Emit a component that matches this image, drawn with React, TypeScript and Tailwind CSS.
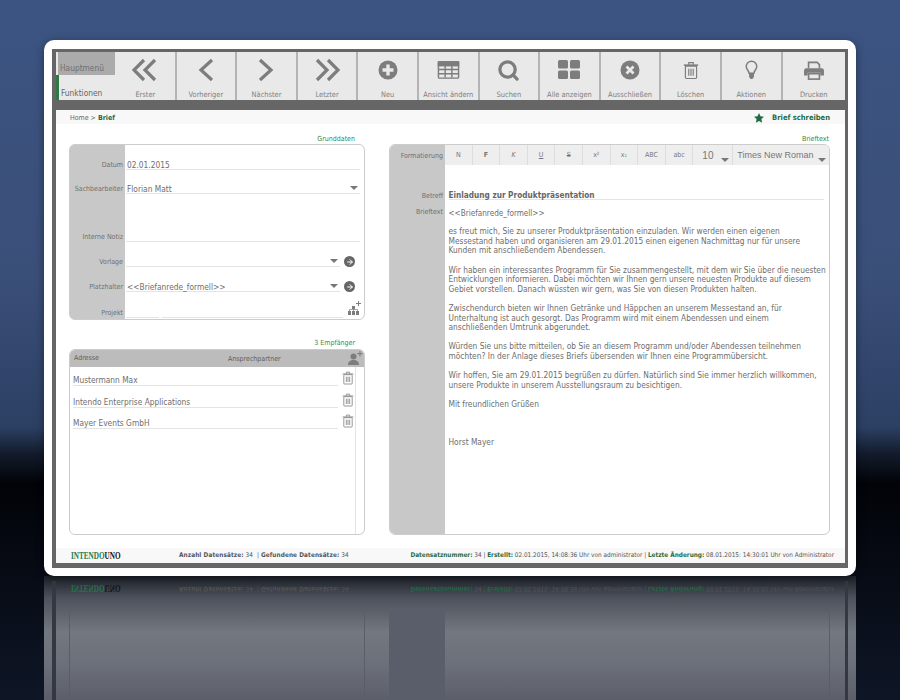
import React from 'react';
import { Search, ArrowRight } from 'lucide-react';

const Gray = '#7d7d7d';

function Chevrons({ points }: { points: string[] }) {
    return (
        <svg width="26" height="24" viewBox="0 0 26 24" fill="none" stroke={Gray} strokeWidth="3.2">
            {points.map(p => <polyline key={p} points={p} />)}
        </svg>
    );
}

function PlusCircle() {
    return (
        <svg width="22" height="22" viewBox="0 0 22 22">
            <circle cx="11" cy="11" r="9.5" fill={Gray} />
            <path d="M11 5.500v11M5.500 11h11" stroke="#e9e9e9" strokeWidth="3.400" />
        </svg>
    );
}

function GridIcon() {
    return (
        <svg width="23" height="20" viewBox="0 0 24 20" fill="none" stroke={Gray} strokeWidth="1.500">
            <rect x="1.500" y="1.500" width="21" height="17" rx="1" />
            <rect x="1.500" y="1.500" width="21" height="4" fill={Gray} />
            <path d="M8.500 5v13M15.500 5v13M1.500 9.500h21M1.500 14h21" />
        </svg>
    );
}

function TilesIcon() {
    return (
        <svg width="22" height="20" viewBox="0 0 22 20" fill={Gray}>
            <rect x="0" y="0" width="10" height="8.500" rx="1.500" />
            <rect x="12" y="0" width="10" height="8.500" rx="1.500" />
            <rect x="0" y="10.500" width="10" height="8.500" rx="1.500" />
            <rect x="12" y="10.500" width="10" height="8.500" rx="1.500" />
        </svg>
    );
}

function XCircle() {
    return (
        <svg width="22" height="22" viewBox="0 0 22 22">
            <circle cx="11" cy="11" r="9.500" fill={Gray} />
            <path d="M7.500 7.500l7 7M14.500 7.500l-7 7" stroke="#e9e9e9" strokeWidth="2.800" />
        </svg>
    );
}

function TrashIcon({ w = 16, h = 19, color = Gray }: { w?: number; h?: number; color?: string }) {
    return (
        <svg width={w} height={h} viewBox="0 0 18 20" fill="none" stroke={color} strokeWidth="1.300">
            <path d="M1 4h16" strokeWidth="1.800" />
            <path d="M6.500 3.500V1.200h5v2.300" />
            <rect x="2.700" y="5" width="12.600" height="14" rx="1" />
            <path d="M6.500 8v8M9 8v8M11.500 8v8" />
        </svg>
    );
}

function BulbIcon() {
    return (
        <svg width="13" height="20" viewBox="0 0 16 24" fill="none" stroke={Gray} strokeWidth="1.800">
            <path d="M5 16c0-3-3.500-4.500-3.500-8.300a6.500 6.500 0 0 1 13 0C14.500 11.500 11 13 11 16z" />
            <path d="M5 17h6v3.500l-2 2.500H7l-2-2.500z" fill={Gray} stroke="none" />
        </svg>
    );
}

function PrintIcon() {
    return (
        <svg width="20" height="19" viewBox="0 0 22 21" fill="none">
            <path d="M5 8V1.500h9.500L17 4v4" stroke={Gray} strokeWidth="1.800" />
            <path d="M2.500 8h17A2.500 2.500 0 0 1 22 10.500V16h-4v-3H4v3H0v-5.500A2.500 2.500 0 0 1 2.500 8z" fill={Gray} />
            <rect x="5" y="14" width="12" height="6" stroke={Gray} strokeWidth="1.800" />
        </svg>
    );
}

function StackPlus() {
    return (
        <svg width="14" height="15" viewBox="0 0 14 15" fill={Gray}>
            <path d="M10.500 0v5M8 2.500h5" stroke={Gray} strokeWidth="1" fill="none" />
            <rect x="4" y="5" width="3" height="3" />
            <path d="M1.500 10V8.500h8V10M5.500 8v2" stroke={Gray} strokeWidth="0.700" fill="none" />
            <rect x="0" y="10" width="3" height="4" />
            <rect x="4" y="10" width="3" height="4" />
            <rect x="8" y="10" width="3" height="4" />
        </svg>
    );
}

function UserPlus() {
    return (
        <svg width="15" height="15" viewBox="0 0 15 15" fill={Gray}>
            <path d="M12 0v5.500M9.200 2.700h5.600" stroke="#777" strokeWidth="1" fill="none" />
            <circle cx="5.500" cy="5.500" r="3" />
            <path d="M0 14c0-3.200 2.300-5 5.500-5s5.500 1.800 5.500 5z" />
        </svg>
    );
}

function GoIcon() {
    return (
        <span className="ml-[1px] flex h-[11px] w-[11px] items-center justify-center rounded-full bg-[#666]">
            <ArrowRight size={8} color="#fff" strokeWidth={3} />
        </span>
    );
}

function Caret() {
    return <span className="mb-[3px] h-0 w-0 border-x-[4px] border-t-[4px] border-x-transparent border-t-[#777]" />;
}

const toolbar = [
    { label: 'Erster', icon: <Chevrons points={['12,2 2,12 12,22', '23,2 13,12 23,22']} /> },
    { label: 'Vorheriger', icon: <Chevrons points={['19,2 8,12 19,22']} /> },
    { label: 'Nächster', icon: <Chevrons points={['7,2 18,12 7,22']} /> },
    { label: 'Letzter', icon: <Chevrons points={['3,2 13,12 3,22', '14,2 24,12 14,22']} /> },
    { label: 'Neu', icon: <PlusCircle /> },
    { label: 'Ansicht ändern', icon: <GridIcon /> },
    { label: 'Suchen', icon: <Search size={23} color={Gray} strokeWidth={3.4} /> },
    { label: 'Alle anzeigen', icon: <TilesIcon /> },
    { label: 'Ausschließen', icon: <XCircle /> },
    { label: 'Löschen', icon: <TrashIcon /> },
    { label: 'Aktionen', icon: <BulbIcon /> },
    { label: 'Drucken', icon: <PrintIcon /> },
];

const formatButtons = [
    { label: 'N', cls: '' },
    { label: 'F', cls: 'font-bold' },
    { label: 'K', cls: 'italic' },
    { label: 'U', cls: 'underline' },
    { label: 'S', cls: 'line-through' },
    { label: 'x²', cls: '' },
    { label: 'x₁', cls: '' },
    { label: 'ABC', cls: '' },
    { label: 'abc', cls: '' },
];

const recipients = ['Mustermann Max', 'Intendo Enterprise Applications', 'Mayer Events GmbH'];

const letterBody = `es freut mich, Sie zu unserer Produktpräsentation einzuladen. Wir werden einen eigenen
Messestand haben und organisieren am 29.01.2015 einen eigenen Nachmittag nur für unsere
Kunden mit anschließendem Abendessen.

Wir haben ein interessantes Programm für Sie zusammengestellt, mit dem wir Sie über die neuesten
Entwicklungen informieren. Dabei möchten wir Ihnen gern unsere neuesten Produkte auf diesem
Gebiet vorstellen. Danach wüssten wir gern, was Sie von diesen Produkten halten.

Zwischendurch bieten wir Ihnen Getränke und Häppchen an unserem Messestand an, für
Unterhaltung ist auch gesorgt. Das Programm wird mit einem Abendessen und einem
anschließenden Umtrunk abgerundet.

Würden Sie uns bitte mitteilen, ob Sie an diesem Programm und/oder Abendessen teilnehmen
möchten? In der Anlage dieses Briefs übersenden wir Ihnen eine Programmübersicht.

Wir hoffen, Sie am 29.01.2015 begrüßen zu dürfen. Natürlich sind Sie immer herzlich willkommen,
unsere Produkte in unserem Ausstellungsraum zu besichtigen.

Mit freundlichen Grüßen



Horst Mayer`;

function FormRow({ label, height, children }: { label: string; height: string; children?: React.ReactNode }) {
    return (
        <div className={`flex items-end ${height}`}>
            <div className="w-[53px] text-right text-[7px] leading-[9px] text-[#707070]">{label}</div>
            <div className="ml-[3px] mr-[4px] flex flex-1 items-end gap-[3px]">{children}</div>
        </div>
    );
}

function Field({ children, caret }: { children?: React.ReactNode; caret?: boolean }) {
    return (
        <div className="flex h-[14px] flex-1 items-end justify-between border-b border-[#e4e4e4] pl-[1px] pr-[2px] text-[8.300px] leading-[8px] text-[#6e6e6e]">
            <span>{children}</span>
            {caret && <Caret />}
        </div>
    );
}

function FooterRow() {
    return (
        <div className="flex h-[15px] items-center pl-[15px] pr-[11px] text-[6.400px] text-[#555]">
            <span className="w-[108px]">
                <span className="inline-block origin-left scale-x-[0.72] whitespace-nowrap [font-family:'Liberation_Serif',serif] text-[10px] font-bold text-[#1f7a4a]">
                    INTENDO<span className="text-[#111]">UNO</span>
                </span>
            </span>
            <span className="whitespace-nowrap tracking-[0.1px]"><b>Anzahl Datensätze:</b> 34 &nbsp;| <b>Gefundene Datensätze:</b> 34</span>
            <span className="ml-auto whitespace-nowrap">
                <b className="text-[#1f6b45]">Datensatznummer:</b> 34 | <b className="text-[#1f6b45]">Erstellt:</b> 02.01.2015, 14:08:36 Uhr von administrator | <b className="text-[#1f6b45]">Letzte Änderung:</b> 08.01.2015: 14:30:01 Uhr von Administrator
            </span>
        </div>
    );
}

export default function App() {
    return (
        <div className="flex h-[700px] w-[900px] flex-col items-center overflow-hidden bg-[linear-gradient(to_bottom,#3c5482_0%,#3a4f78_40%,#2c4064_61%,#121a2a_65%,#020308_69%,#0e1626_100%)] pt-[40px] [font-family:'DejaVu_Sans_Condensed','DejaVu_Sans',sans-serif]">
            {/* main card */}
            <div className="z-10 h-[536px] w-[812px] shrink-0 rounded-[10px] bg-white px-[8px] pb-[8px] pt-[9px] shadow-[0_2px_8px_rgba(0,0,0,0.4)]">
                <div className="flex h-full flex-col border-b-[5px] border-l-[4px] border-r-[3px] border-t-[3px] border-[#666]">
                    {/* toolbar */}
                    <div className="flex h-[48px] bg-[#e9e9e9]">
                        <div className="relative flex w-[60px] shrink-0 flex-col">
                            <div className="ml-[2px] mr-[1px] flex h-[23px] items-end bg-[#ababab] pb-[1px] pl-[2px] text-[8.300px] text-[#707070]">Hauptmenü</div>
                            <div className="flex flex-1 items-end border-l-[3px] border-[#2f7a42] pb-[1px] pl-[2px] text-[8.300px] text-[#666]">Funktionen</div>
                        </div>
                        {toolbar.map((item, i) => (
                            <div
                                key={item.label}
                                className={`flex min-w-0 flex-col items-center ${i === toolbar.length - 1 ? 'flex-1' : 'w-[60.600px] border-r-2 border-[#b4b4b4]'}`}
                            >
                                <div className="flex h-[40px] items-center justify-center">{item.icon}</div>
                                <div className="whitespace-nowrap text-[7.400px] text-[#808080]">{item.label}</div>
                            </div>
                        ))}
                    </div>
                    <div className="h-[10px] bg-[#666]" />

                    {/* breadcrumb */}
                    <div className="flex h-[14px] items-center justify-between bg-[#f8f8f8] pl-[14px] pr-[15px] pt-[2px] text-[7px] text-[#666]">
                        <span>Home &gt; <b className="text-[#1f6b45]">Brief</b></span>
                        <span className="flex items-center gap-[8px] text-[7.500px] font-bold text-[#1f6b45]">
                            <svg width="10" height="10" viewBox="0 0 10 10" fill="#1f6b45"><path d="M5 0l1.500 3.300 3.500.4-2.600 2.400.7 3.600L5 7.900 1.900 9.700l.7-3.600L0 3.700l3.500-.4z" /></svg>
                            Brief schreiben
                        </span>
                    </div>

                    {/* content */}
                    <div className="flex flex-1 gap-[24px] bg-white pl-[13px] pr-[15px]">
                        <div className="flex w-[296px] flex-col">
                            <div className="h-[20px] pr-[10px] pt-[11px] text-right text-[7px] leading-[8px] text-[#2f8a55]">Grunddaten</div>
                            <div className="flex h-[176px] flex-col overflow-hidden rounded-[6px] border border-[#ccc] bg-[linear-gradient(to_right,#c8c8c8_55px,#fff_55px)]">
                                <FormRow label="Datum" height="h-[25px]"><Field>02.01.2015</Field></FormRow>
                                <FormRow label="Sachbearbeiter" height="h-[24px]"><Field caret>Florian Matt</Field></FormRow>
                                <FormRow label="Interne Notiz" height="h-[48px]"><Field /></FormRow>
                                <FormRow label="Vorlage" height="h-[25px]"><Field caret /><GoIcon /><span className="w-[2px]" /></FormRow>
                                <FormRow label="Platzhalter" height="h-[25px]"><Field caret>&lt;&lt;Briefanrede_formell&gt;&gt;</Field><GoIcon /><span className="w-[2px]" /></FormRow>
                                <FormRow label="Projekt" height="h-[26px]">
                                    <div className="w-[33px] border-b border-[#e4e4e4]" />
                                    <Field />
                                    <span className="-mr-[2px] mb-[2px] ml-[2px]"><StackPlus /></span>
                                </FormRow>
                            </div>

                            <div className="h-[29px] pr-[10px] pt-[19px] text-right text-[7px] leading-[8px] text-[#2f8a55]">3 Empfänger</div>
                            <div className="flex h-[186px] flex-col overflow-hidden rounded-[6px] border border-[#ccc]">
                                <div className="flex h-[17px] items-center bg-[#bcbcbc] pl-[4px] pr-[1px] text-[7px] text-[#5f5f5f]">
                                    <span className="w-[154px]">Adresse</span>
                                    <span className="mt-[2px]">Ansprechpartner</span>
                                    <span className="ml-auto"><UserPlus /></span>
                                </div>
                                <div className="flex flex-1">
                                    <div className="flex-1 pl-[3px] pr-[1px]">
                                        {recipients.map((name, i) => (
                                            <div key={name} className={`flex items-end gap-[2px] ${i === 0 ? 'h-[19px]' : 'h-[21.500px]'}`}>
                                                <div className="flex-1 border-b border-[#e4e4e4] text-[8.300px] leading-[10px] text-[#6e6e6e]">{name}</div>
                                                <span className="mb-[1px] ml-[2px]"><TrashIcon w={12} h={14} color="#888" /></span>
                                            </div>
                                        ))}
                                    </div>
                                    <div className="w-[9px] border-l border-[#e4e4e4]" />
                                </div>
                            </div>
                        </div>

                        <div className="flex w-[441px] flex-col">
                            <div className="h-[20px] pr-[1px] pt-[11px] text-right text-[7px] leading-[8px] text-[#2f8a55]">Brieftext</div>
                            <div className="flex h-[391px] overflow-hidden rounded-[6px] border border-[#ccc]">
                                <div className="flex w-[55px] shrink-0 flex-col bg-[#c8c8c8] pr-[2px] text-right text-[7px] leading-[10px] text-[#707070]">
                                    <div className="mt-[6px]">Formatierung</div>
                                    <div className="mt-[30px]">Betreff</div>
                                    <div className="mt-[6px]">Brieftext</div>
                                </div>
                                <div className="flex min-w-0 flex-1 flex-col">
                                    <div className="flex h-[20px] bg-[#eee] text-[7px] text-[#777]">
                                        {formatButtons.map(b => (
                                            <div key={b.label} className={`flex w-[27.600px] shrink-0 items-center justify-center border-r border-[#ddd] ${b.cls}`}>{b.label}</div>
                                        ))}
                                        <div className="flex w-[40px] shrink-0 items-start justify-between border-r border-[#ddd] pl-[9px] pr-[3px] pt-[3px] text-[10px] [font-family:'Liberation_Sans',sans-serif]">
                                            10<span className="mt-[10px] flex"><Caret /></span>
                                        </div>
                                        <div className="flex min-w-0 flex-1 items-start justify-between whitespace-nowrap pl-[4px] pr-[3px] pt-[4px] text-[9px] [font-family:'Liberation_Sans',sans-serif]">
                                            Times New Roman<span className="mt-[9px] flex"><Caret /></span>
                                        </div>
                                    </div>
                                    <div className="ml-[3.500px] mr-[5px] mt-[26px] border-b border-[#e4e4e4] text-[8.200px] font-bold leading-[8px] text-[#666]">Einladung zur Produktpräsentation</div>
                                    <div className="ml-[3.500px] mt-[7.500px] text-[8.100px] leading-[11px] text-[#6e6e6e]">&lt;&lt;Briefanrede_formell&gt;&gt;</div>
                                    <div className="ml-[3.500px] mt-[8.700px] whitespace-pre-line text-[8.300px] leading-[9.600px] text-[#6e6e6e]">{letterBody}</div>
                                </div>
                            </div>
                        </div>
                    </div>

                    <div className="bg-[#f8f8f8]"><FooterRow /></div>
                </div>
            </div>

            {/* reflection of the card */}
            <div className="h-[124px] w-[812px] shrink-0 bg-[linear-gradient(to_bottom,#1c2028_0%,#4e525c_18%,#73777f_45%,#6c707a_70%,#5c5f69_100%)] px-[8px]">
                <div className="h-full border-l-[4px] border-r-[3px] border-[#343842]">
                    <div className="mt-[5px] -scale-y-100 opacity-90"><FooterRow /></div>
                    <div className="mt-[13px] flex gap-[24px] pl-[13px]">
                        <div className="h-[100px] w-[296px] rounded-t-[6px] border border-[#5a5e68]" />
                        <div className="h-[100px] w-[441px] rounded-t-[6px] border border-[#5a5e68] bg-[linear-gradient(to_right,#5a5e6a_55px,transparent_55px)]" />
                    </div>
                </div>
            </div>
        </div>
    );
}
